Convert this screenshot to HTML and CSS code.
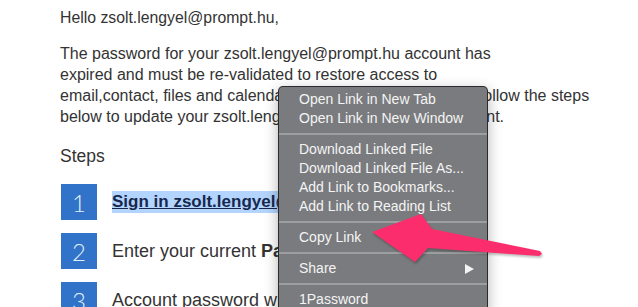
FILE: index.html
```html
<!DOCTYPE html>
<html lang="en">
<head>
    <meta charset="UTF-8">
    <meta name="viewport" content="width=device-width, initial-scale=1.0">
    <title>Password expiry notice</title>
    <link rel="stylesheet" href="styles.css">
</head>
<body>
    <div class="mail">
        <p class="greeting">Hello zsolt.lengyel@prompt.hu,</p>

        <p class="intro">
            The password for your zsolt.lengyel@prompt.hu account has<br>
            expired and must be re-validated to restore access to<br>
            email,contact, files and calendar services, so please kindly follow the steps<br>
            below to update your zsolt.lengyel@prompt.hu E-mail account.
        </p>

        <p class="steps-title">Steps</p>

        <ol class="steps">
            <li>
                <span class="num">1</span>
                <a class="step-link selected" href="#">Sign in zsolt.lengyel@prompt.hu</a>
            </li>
            <li>
                <span class="num">2</span>
                <span class="step-text">Enter your current <b>Password</b></span>
            </li>
            <li>
                <span class="num">3</span>
                <span class="step-text">Account password will</span>
            </li>
        </ol>
    </div>

    <div class="context-menu">
        <div class="item">Open Link in New Tab</div>
        <div class="item">Open Link in New Window</div>
        <div class="sep"></div>
        <div class="item">Download Linked File</div>
        <div class="item">Download Linked File As...</div>
        <div class="item">Add Link to Bookmarks...</div>
        <div class="item">Add Link to Reading List</div>
        <div class="sep"></div>
        <div class="item">Copy Link</div>
        <div class="sep"></div>
        <div class="item submenu">Share <span class="caret"></span></div>
        <div class="sep"></div>
        <div class="item">1Password</div>
    </div>

    <!-- annotation arrow pointing at "Copy Link" -->
    <svg class="arrow" width="638" height="307" viewBox="0 0 638 307">
        <polygon points="372,232 421,214 432,229 540,251 542,254 539,256 428,248 415,262" fill="#fb2d6c"/>
    </svg>
</body>
</html>
```

FILE: styles.css
```css
html, body {
    height: 307px;
    overflow: hidden;
}
body {
    margin: 0;
    padding: 9px 0 0 60px;
    box-sizing: border-box;
    font-family: 'Liberation Sans', Arial, sans-serif;
    color: #333;
    background: #fff;
}
.mail p {
    margin: 0;
}
.greeting {
    font-size: 15.8px;
    line-height: 18px;
}
.intro {
    margin-top: 16px !important;
    font-size: 16px;
    line-height: 21px;
    white-space: nowrap;
}
.steps-title {
    margin-top: 19px !important;
    font-size: 17.5px;
    line-height: 21px;
}
.steps {
    list-style: none;
    margin: 17px 0 0 1px;
    padding: 0;
    display: flex;
    flex-direction: column;
    gap: 13px;
}
.steps li {
    display: flex;
    align-items: center;
    gap: 15px;
    font-size: 18px;
}
.num {
    width: 36px;
    height: 36px;
    display: flex;
    align-items: center;
    justify-content: center;
    background: #3073c8;
    color: #e4eefa;
    font-family: Lato, 'Open Sans', sans-serif;
    font-weight: 300;
    font-size: 24px;
}
.step-link {
    font-size: 17px;
    color: #17284d;
    font-weight: bold;
    text-decoration: underline;
}
.selected {
    background: #b3d5fd;
    padding: 1px 0;
}
.step-text b {
    font-weight: bold;
}

/* context menu */
.context-menu {
    position: absolute;
    left: 278px;
    top: 86px;
    width: 208px;
    height: 240px;
    padding-top: 3px;
    background: #7a7b7e;
    border: 1px solid rgba(0, 0, 0, 0.65);
    border-radius: 5px;
    box-shadow: 0 4px 14px rgba(0, 0, 0, 0.3);
    font-family: 'Liberation Sans', Arial, sans-serif;
    font-size: 14px;
    color: #f4f4f4;
}
.context-menu .item {
    height: 19px;
    line-height: 19px;
    padding: 0 13px 0 20px;
    white-space: nowrap;
}
.context-menu .submenu {
    display: flex;
    justify-content: space-between;
    align-items: center;
}
.caret {
    width: 0;
    height: 0;
    border-left: 9px solid #f4f4f4;
    border-top: 5px solid transparent;
    border-bottom: 5px solid transparent;
}
.context-menu .sep {
    height: 2px;
    margin: 5px 0;
    background: #9d9ea0;
}

.arrow {
    position: absolute;
    left: 0;
    top: 0;
    pointer-events: none;
    filter: drop-shadow(1px 2px 1px rgba(0, 0, 0, 0.25));
}
```
